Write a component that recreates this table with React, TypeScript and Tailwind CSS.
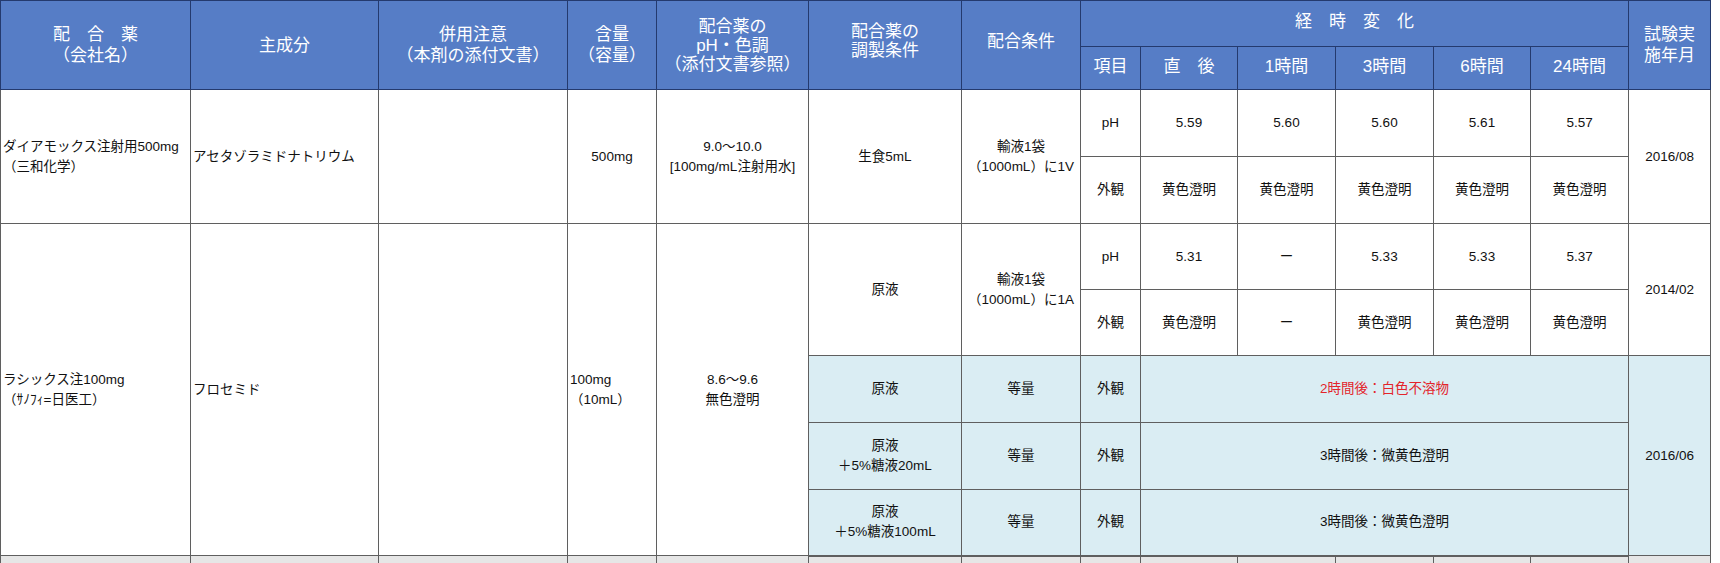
import React from 'react';

const th = 'border border-[#243a6e] bg-[#567dc6] px-1 text-center align-middle text-[17px] font-normal leading-[21px] text-white';
const td = 'border border-[#5f5f5f] px-1 text-center align-middle text-[13.5px] leading-[20px] text-[#111]';
const tdL = 'border border-[#5f5f5f] pl-[2px] pr-1 text-left align-middle text-[13.5px] leading-[20px] text-[#111]';
const blue = 'bg-[#daedf3]';

const widths = [190, 188, 189, 89, 152, 153, 119, 60, 97, 98, 98, 97, 98, 82];

export default function App() {
  return (
    <div className="min-h-screen bg-white" style={{ fontFamily: '"Liberation Sans", "Noto Sans CJK JP", sans-serif' }}>
      <table className="w-[1710px] table-fixed border-collapse">
        <colgroup>
          {widths.map((w, i) => <col key={i} style={{ width: w }} />)}
        </colgroup>
        <thead>
          <tr className="h-[46px]">
            <th rowSpan={2} className={th}>配　合　薬<br />（会社名）</th>
            <th rowSpan={2} className={th}>主成分</th>
            <th rowSpan={2} className={th}>併用注意<br />（本剤の添付文書）</th>
            <th rowSpan={2} className={th}>含量<br />（容量）</th>
            <th rowSpan={2} className={`${th} !leading-[19px]`}>配合薬の<br />pH・色調<br />（添付文書参照）</th>
            <th rowSpan={2} className={`${th} !leading-[19px] pb-2`}>配合薬の<br />調製条件</th>
            <th rowSpan={2} className={`${th} pb-2`}>配合条件</th>
            <th colSpan={6} className={`${th} pb-1`}>経　時　変　化</th>
            <th rowSpan={2} className={th}>試験実<br />施年月</th>
          </tr>
          <tr className="h-[43px]">
            <th className={`${th} pb-1`}>項目</th>
            <th className={`${th} pb-1`}>直　後</th>
            <th className={`${th} pb-1`}>1時間</th>
            <th className={`${th} pb-1`}>3時間</th>
            <th className={`${th} pb-1`}>6時間</th>
            <th className={`${th} pb-1`}>24時間</th>
          </tr>
        </thead>
        <tbody>
          <tr className="h-[67px]">
            <td rowSpan={2} className={tdL}>ダイアモックス注射用500mg<br />（三和化学）</td>
            <td rowSpan={2} className={tdL}>アセタゾラミドナトリウム</td>
            <td rowSpan={2} className={td}></td>
            <td rowSpan={2} className={td}>500mg</td>
            <td rowSpan={2} className={td}>9.0〜10.0<br />[100mg/mL注射用水]</td>
            <td rowSpan={2} className={td}>生食5mL</td>
            <td rowSpan={2} className={td}>輸液1袋<br />（1000mL）に1V</td>
            <td className={td}>pH</td>
            <td className={td}>5.59</td>
            <td className={td}>5.60</td>
            <td className={td}>5.60</td>
            <td className={td}>5.61</td>
            <td className={td}>5.57</td>
            <td rowSpan={2} className={td}>2016/08</td>
          </tr>
          <tr className="h-[67px]">
            <td className={td}>外観</td>
            <td className={td}>黄色澄明</td>
            <td className={td}>黄色澄明</td>
            <td className={td}>黄色澄明</td>
            <td className={td}>黄色澄明</td>
            <td className={td}>黄色澄明</td>
          </tr>
          <tr className="h-[66px]">
            <td rowSpan={5} className={tdL}>ラシックス注100mg<br />（ｻﾉﾌｨ=日医工）</td>
            <td rowSpan={5} className={tdL}>フロセミド</td>
            <td rowSpan={5} className={td}></td>
            <td rowSpan={5} className={tdL}>100mg<br />（10mL）</td>
            <td rowSpan={5} className={td}>8.6〜9.6<br />無色澄明</td>
            <td rowSpan={2} className={td}>原液</td>
            <td rowSpan={2} className={td}>輸液1袋<br />（1000mL）に1A</td>
            <td className={td}>pH</td>
            <td className={td}>5.31</td>
            <td className={td}>ー</td>
            <td className={td}>5.33</td>
            <td className={td}>5.33</td>
            <td className={td}>5.37</td>
            <td rowSpan={2} className={td}>2014/02</td>
          </tr>
          <tr className="h-[66px]">
            <td className={td}>外観</td>
            <td className={td}>黄色澄明</td>
            <td className={td}>ー</td>
            <td className={td}>黄色澄明</td>
            <td className={td}>黄色澄明</td>
            <td className={td}>黄色澄明</td>
          </tr>
          <tr className={`h-[67px] ${blue}`}>
            <td className={td}>原液</td>
            <td className={td}>等量</td>
            <td className={td}>外観</td>
            <td colSpan={5} className={`${td} !text-[#e3242b]`}>2時間後：白色不溶物</td>
            <td rowSpan={3} className={td}>2016/06</td>
          </tr>
          <tr className={`h-[67px] ${blue}`}>
            <td className={td}>原液<br />＋5%糖液20mL</td>
            <td className={td}>等量</td>
            <td className={td}>外観</td>
            <td colSpan={5} className={td}>3時間後：微黄色澄明</td>
          </tr>
          <tr className={`h-[66px] ${blue}`}>
            <td className={`${td} border-b-2`}>原液<br />＋5%糖液100mL</td>
            <td className={`${td} border-b-2`}>等量</td>
            <td className={`${td} border-b-2`}>外観</td>
            <td colSpan={5} className={`${td} border-b-2`}>3時間後：微黄色澄明</td>
          </tr>
          <tr className="h-[40px] bg-[#e6e6e6]">
            {widths.map((_, i) => <td key={i} className={td}></td>)}
          </tr>
        </tbody>
      </table>
    </div>
  );
}
